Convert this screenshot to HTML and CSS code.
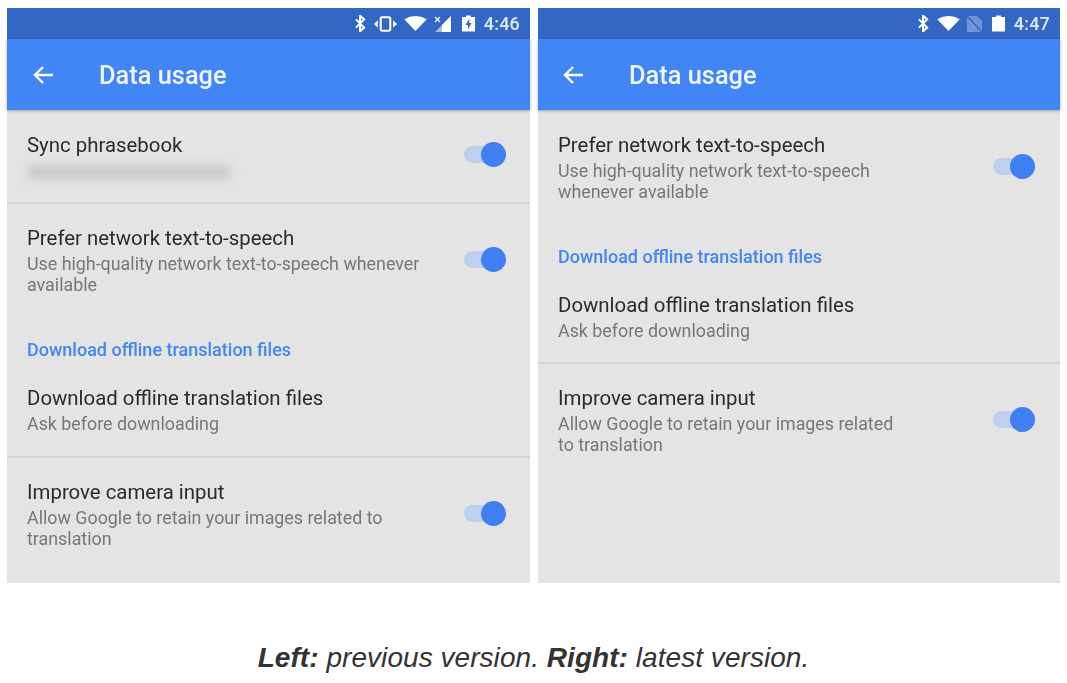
FILE: index.html
```html
<!DOCTYPE html>
<html lang="en">
<head>
  <meta charset="UTF-8" />
  <title>Data usage comparison</title>
  <link rel="stylesheet" href="styles.css">
</head>
<body>
  <div class="compare">
    <!-- Previous version -->
    <div class="phone phone-left">
      <div class="statusbar">
        <svg class="icon-bt" viewBox="0 0 12 18"><path d="M1 4.500l9 9-4.500 4V.5l4.500 4-9 9" fill="none" stroke="#fff" stroke-width="2.200"/></svg>
        <svg class="icon-vibrate" viewBox="0 0 24 16"><rect x="7" y="1" width="10" height="14" rx="1.500" fill="none" stroke="#fff" stroke-width="2.200"/><path d="M0 8l4-4v8zM24 8l-4-4v8z" fill="#fff"/></svg>
        <svg class="icon-wifi" viewBox="0 0 24 16"><path d="M0 3.500Q12-3.500 24 3.500L12 16z" fill="#fff"/></svg>
        <svg class="icon-signal" viewBox="0 0 18 16"><path d="M17 0v16H1z" fill="#fff" opacity=".55"/><path d="M17 0v16H8V9z" fill="#fff"/><path d="M1 1l5 5M6 1L1 6" stroke="#3367c4" stroke-width="3"/><path d="M1 1l5 5M6 1L1 6" stroke="#fff" stroke-width="1.200"/></svg>
        <svg class="icon-battery" viewBox="0 0 13 16"><path d="M4 0h5v1.500h4V16H0V1.500h4z" fill="#fff"/><path d="M7.500 3L3.500 9.500h2.500V14l3.500-6.500H7z" fill="#3367c4"/></svg>
        <span class="clock">4:46</span>
      </div>
      <div class="toolbar">
        <svg class="icon-back" viewBox="0 0 22 20"><path d="M21 10H3M11 2l-8 8 8 8" fill="none" stroke="#fff" stroke-width="2.400"/></svg>
        <span class="toolbar-title">Data usage</span>
      </div>
      <div class="list">
        <div class="row row-sync divided">
          <div class="row-text">
            <div class="title">Sync phrasebook</div>
            <div class="blurred"></div>
          </div>
          <div class="toggle"><span class="thumb"></span></div>
        </div>
        <div class="row">
          <div class="row-text">
            <div class="title">Prefer network text-to-speech</div>
            <div class="sub">Use high-quality network text-to-speech whenever available</div>
          </div>
          <div class="toggle"><span class="thumb"></span></div>
        </div>
        <div class="section">Download offline translation files</div>
        <div class="row row-after-section divided">
          <div class="row-text">
            <div class="title">Download offline translation files</div>
            <div class="sub">Ask before downloading</div>
          </div>
        </div>
        <div class="row">
          <div class="row-text">
            <div class="title">Improve camera input</div>
            <div class="sub">Allow Google to retain your images related to translation</div>
          </div>
          <div class="toggle"><span class="thumb"></span></div>
        </div>
      </div>
    </div>

    <!-- Latest version -->
    <div class="phone phone-right">
      <div class="statusbar">
        <svg class="icon-bt" viewBox="0 0 12 18"><path d="M1 4.500l9 9-4.500 4V.5l4.500 4-9 9" fill="none" stroke="#fff" stroke-width="2.200"/></svg>
        <svg class="icon-wifi" viewBox="0 0 24 16"><path d="M0 3.500Q12-3.500 24 3.500L12 16z" fill="#fff"/></svg>
        <svg class="icon-nosim" viewBox="0 0 15 16"><path d="M0 0h10l5 5v11H0z" fill="#fff" opacity=".3"/><path d="M0 0l15 16" stroke="#3367c4" stroke-width="1.500"/></svg>
        <svg class="icon-battery" viewBox="0 0 13 16"><path d="M4 0h5v1.500h4V16H0V1.500h4z" fill="#fff"/></svg>
        <span class="clock">4:47</span>
      </div>
      <div class="toolbar">
        <svg class="icon-back" viewBox="0 0 22 20"><path d="M21 10H3M11 2l-8 8 8 8" fill="none" stroke="#fff" stroke-width="2.400"/></svg>
        <span class="toolbar-title">Data usage</span>
      </div>
      <div class="list">
        <div class="row">
          <div class="row-text">
            <div class="title">Prefer network text-to-speech</div>
            <div class="sub">Use high-quality network text-to-speech whenever available</div>
          </div>
          <div class="toggle"><span class="thumb"></span></div>
        </div>
        <div class="section">Download offline translation files</div>
        <div class="row row-after-section divided">
          <div class="row-text">
            <div class="title">Download offline translation files</div>
            <div class="sub">Ask before downloading</div>
          </div>
        </div>
        <div class="row">
          <div class="row-text">
            <div class="title">Improve camera input</div>
            <div class="sub">Allow Google to retain your images related to translation</div>
          </div>
          <div class="toggle"><span class="thumb"></span></div>
        </div>
      </div>
    </div>
  </div>

  <p class="caption"><b>Left:</b> previous version. <b>Right:</b> latest version.</p>
</body>
</html>
```
FILE: styles.css
```css
/* Base reset */
* {
  box-sizing: border-box;
  margin: 0;
  padding: 0;
}

body {
  font-family: "Roboto", sans-serif;
  background: #fff;
  overflow: hidden;
}

.compare {
  display: flex;
  gap: 8px;
  padding: 8px 7px 0;
}

.phone {
  display: flex;
  flex-direction: column;
  height: 575px;
  background-color: #e4e4e4;
  filter: blur(0.45px);
}
.phone-left {
  width: 523px;
}
.phone-right {
  width: 522px;
}

/* Status bar */
.statusbar {
  display: flex;
  align-items: center;
  justify-content: flex-end;
  height: 31px;
  padding-right: 10px;
  background-color: #3367c4;
}
.statusbar svg {
  display: block;
  flex: none;
}
.icon-bt {
  width: 11px;
  height: 17px;
  margin-right: 8px;
}
.icon-vibrate {
  width: 23px;
  height: 16px;
  margin-right: 7px;
}
.icon-wifi {
  width: 23px;
  height: 15px;
  margin-right: 7px;
}
.icon-signal {
  width: 18px;
  height: 16px;
  margin-right: 10px;
}
.icon-nosim {
  width: 15px;
  height: 16px;
  margin-right: 10px;
}
.icon-battery {
  width: 13px;
  height: 17px;
  margin-right: 9px;
}
.clock {
  color: #dfe9fb;
  font-size: 18px;
  font-weight: 500;
  letter-spacing: 0.2px;
}

/* Toolbar */
.toolbar {
  display: flex;
  align-items: center;
  flex: none;
  height: 71px;
  padding-left: 25px;
  background-color: #4285f4;
  box-shadow: 0 1px 3px rgba(0, 0, 0, 0.3);
  position: relative;
}
.phone-right .toolbar {
  padding-left: 24px;
}
.icon-back {
  width: 22px;
  height: 20px;
  margin-right: 45px;
}
.toolbar-title {
  color: #f1f5fd;
  font-size: 25.4px;
  font-weight: 500;
}

/* Settings list */
.list {
  padding-top: 1px;
}

.row {
  display: flex;
  align-items: center;
  justify-content: space-between;
  padding: 22px 24px 20px 20px;
}
.phone-right .row {
  padding-right: 25px;
}
.row-after-section {
  padding-top: 26px;
  padding-bottom: 21px;
}
.phone-left .row-after-section {
  padding-bottom: 22px;
}
.divided {
  border-bottom: 2px solid #d3d3d3;
}

.row-sync .toggle {
  margin-bottom: 6px;
}

.row-text {
  width: 400px;
}
.phone-right .row-text {
  width: 345px;
}
.title {
  color: #2b2b2b;
  font-size: 20.4px;
  line-height: 24px;
}
.sub {
  margin-top: 3px;
  color: #777;
  font-size: 17.85px;
  line-height: 21px;
}
.blurred {
  width: 204px;
  height: 13px;
  margin: 9px 0 3px 0;
  background-color: #c8c8c8;
  border-radius: 6px;
  filter: blur(5px);
}

.section {
  padding: 25px 20px 0;
  color: #4285f4;
  font-size: 18px;
  font-weight: 500;
  line-height: 20px;
}

/* Switch */
.toggle {
  display: flex;
  align-items: center;
  justify-content: flex-end;
  flex: none;
  width: 42px;
  height: 25px;
  margin-bottom: 3px;
  position: relative;
}
.toggle::before {
  content: "";
  position: absolute;
  left: 0;
  right: 4px;
  top: 4px;
  bottom: 4px;
  border-radius: 9px;
  background-color: #bfd0ee;
}
.thumb {
  width: 25px;
  height: 25px;
  border-radius: 50%;
  background-color: #3f7ff0;
  position: relative;
}

/* Caption under the screenshots */
.caption {
  margin-top: 57px;
  text-align: center;
  color: #333;
  font-family: "Liberation Sans", Arial, sans-serif;
  font-size: 28px;
  font-style: italic;
  line-height: 36px;
  letter-spacing: 0.05px;
}
```
